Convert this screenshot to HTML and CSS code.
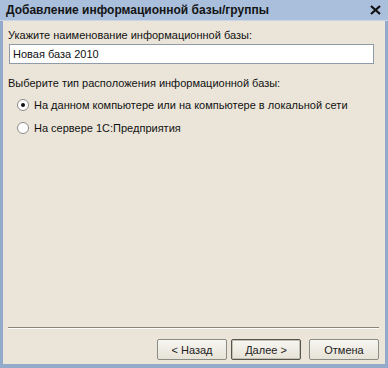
FILE: index.html
```html
<!DOCTYPE html>
<html>
<head>
<meta charset="utf-8">
<link rel="stylesheet" href="styles.css">
</head>
<body>
<div class="window">
  <div class="titlebar">
    <span class="title">Добавление информационной базы/группы</span>
    <svg class="close" width="11" height="10" viewBox="0 0 11 10"><path d="M1 1 L10 9 M10 1 L1 9" stroke="#111" stroke-width="2.2"/></svg>
  </div>
  <div class="content">
    <div class="label">Укажите наименование информационной базы:</div>
    <div class="input">Новая база 2010</div>
    <div class="label label2">Выберите тип расположения информационной базы:</div>
    <div class="radios">
      <div class="radio-row"><span class="radio checked"></span><span>На данном компьютере или на компьютере в локальной сети</span></div>
      <div class="radio-row"><span class="radio"></span><span>На сервере 1С:Предприятия</span></div>
    </div>
  </div>
  <div class="footer">
    <div class="sep"></div>
    <div class="buttons">
      <div class="btn">&lt; Назад</div>
      <div class="btn default">Далее &gt;</div>
      <div class="btn cancel">Отмена</div>
    </div>
  </div>
</div>
</body>
</html>
```

FILE: styles.css
```css
html, body {
  margin: 0;
  padding: 0;
  background: #ebe5d9;
}
.window {
  width: 388px;
  height: 368px;
  box-sizing: border-box;
  border-left: 3px solid #93aacb;
  border-right: 3px solid #93aacb;
  border-bottom: 4px solid #93aacb;
  background: #ebe5d9;
  display: flex;
  flex-direction: column;
  font-family: "Liberation Sans", Arial, sans-serif;
  font-size: 11px;
  color: #111;
  white-space: nowrap;
}
.titlebar {
  height: 20px;
  margin: 0 -3px;
  padding: 0 7px 0 6px;
  background: #a9bfdc;
  border-bottom: 1px solid #c9d6e8;
  display: flex;
  align-items: center;
  justify-content: space-between;
}
.title {
  font-weight: bold;
  font-size: 12px;
  color: #141414;
}
.close {
  display: block;
}
.content {
  padding: 7px 11px 0 5px;
  display: flex;
  flex-direction: column;
}
.label {
  line-height: 14px;
}
.input {
  margin: 2px 0 0 1px;
  height: 20px;
  box-sizing: border-box;
  border: 1px solid #8f9ba8;
  background: #fff;
  padding: 0 0 0 3px;
  line-height: 18px;
}
.label2 {
  margin-top: 12px;
}
.radios {
  margin-top: 6px;
  display: flex;
  flex-direction: column;
  gap: 5px;
}
.radio-row {
  height: 18px;
  display: flex;
  align-items: center;
  padding-left: 9px;
  gap: 5px;
}
.radio {
  width: 10px;
  height: 10px;
  border-radius: 50%;
  border: 1px solid #8a8a8a;
  background: #fff;
  display: flex;
  align-items: center;
  justify-content: center;
}
.radio.checked::after {
  content: "";
  width: 4px;
  height: 4px;
  border-radius: 50%;
  background: #111;
}
.footer {
  margin-top: auto;
  padding: 0 6px 4px 5px;
}
.sep {
  height: 1px;
  background: #8a8577;
  border-bottom: 1px solid #fbfaf6;
}
.buttons {
  margin-top: 10px;
  display: flex;
  justify-content: flex-end;
  gap: 4px;
}
.btn {
  width: 70px;
  height: 21px;
  box-sizing: border-box;
  border: 1px solid #8b8b85;
  border-radius: 2px;
  background: linear-gradient(#f7f6f1, #e6e2d6);
  display: flex;
  align-items: center;
  justify-content: center;
  color: #222;
}
.btn.default {
  border-color: #55544f;
  box-shadow: inset 0 0 0 1px #c4c0b2;
}
.btn.cancel {
  margin-left: 4px;
}
```
